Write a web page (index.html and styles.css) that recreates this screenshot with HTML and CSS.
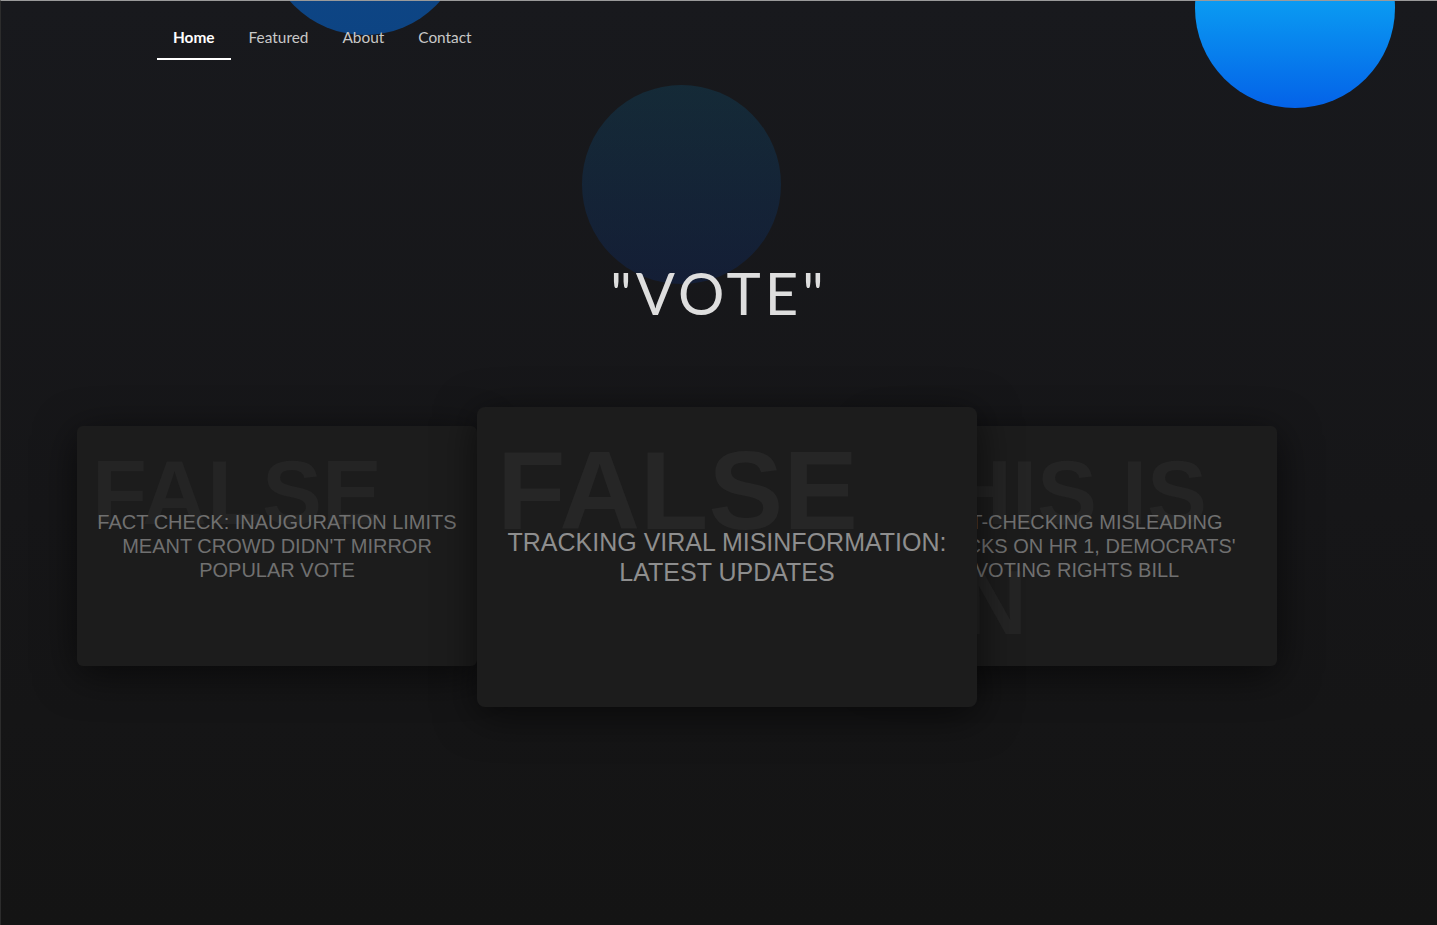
FILE: index.html
```html
<!DOCTYPE html>
<html lang="en">
<head>
<meta charset="utf-8">
<title>"VOTE"</title>
<link rel="stylesheet" href="styles.css">
</head>
<body>
  <div class="blob blob-nav"></div>
  <div class="blob blob-corner"></div>
  <div class="blob blob-hero"></div>

  <nav class="nav">
    <a class="nav-link active" href="#">Home</a>
    <a class="nav-link" href="#">Featured</a>
    <a class="nav-link" href="#">About</a>
    <a class="nav-link" href="#">Contact</a>
  </nav>

  <header class="hero">
    <h1 class="title">"VOTE"</h1>
  </header>

  <section class="carousel">
    <article class="card card-side">
      <p class="card-label">FALSE</p>
      <h2 class="card-title">Fact Check: Inauguration limits meant crowd didn't mirror popular vote</h2>
    </article>
    <article class="card card-main">
      <p class="card-label">FALSE</p>
      <h2 class="card-title">Tracking viral misinformation: Latest updates</h2>
    </article>
    <article class="card card-side card-right">
      <p class="card-label">THIS IS ON</p>
      <h2 class="card-title">Fact-checking misleading attacks on HR 1, Democrats' voting rights bill</h2>
    </article>
  </section>
</body>
</html>
```

FILE: styles.css
```css
html {
  border-top: 1px solid #9a9a9a;
  border-left: 1px solid #2c2c2c;
  background: #141414;
}

body {
  margin: 0;
  height: 924px;
  position: relative;
  overflow: hidden;
  background: linear-gradient(180deg, #18191d 0%, #161618 55%, #141414 100%);
  font-family: Lato, "Noto Sans", "Liberation Sans", sans-serif;
}

/* decorative blobs */
.blob {
  position: absolute;
  width: 200px;
  height: 200px;
  border-radius: 50%;
  z-index: 0;
}

.blob-nav {
  left: 264px;
  top: -166px;
  background: linear-gradient(180deg, #0f4a8c 0%, #0d4483 100%);
}

.blob-corner {
  left: 1194px;
  top: -93px;
  background: linear-gradient(180deg, #0bb2f6 0%, #0a9bf2 46%, #0462e8 100%);
}

.blob-hero {
  left: 581px;
  top: 84px;
  width: 199px;
  height: 199px;
  background: linear-gradient(180deg, rgba(0, 150, 220, 0.14) 0%, rgba(0, 70, 220, 0.14) 100%);
}

/* nav */
.nav {
  position: relative;
  z-index: 1;
  display: flex;
  gap: 2px;
  padding-left: 156px;
}

.nav-link {
  padding: 26px 16px 11px;
  line-height: 20px;
  font-size: 15.4px;
  color: #c8c8c8;
  text-decoration: none;
  border-bottom: 2px solid transparent;
}

.nav-link.active {
  color: #ffffff;
  font-weight: 700;
  border-bottom-color: #ffffff;
}

/* hero */
.hero {
  position: relative;
  z-index: 1;
}

.title {
  margin: 198px 0 0;
  text-align: center;
  font-size: 58px;
  line-height: 70px;
  font-weight: 400;
  letter-spacing: 4px;
  color: #dedede;
}

/* carousel */
.carousel {
  position: relative;
  z-index: 1;
  display: flex;
  align-items: flex-start;
  margin-top: 79px;
  padding-left: 76px;
}

.card {
  position: relative;
  flex: none;
  display: flex;
  align-items: center;
  justify-content: center;
  overflow: hidden;
  background: #1c1c1c;
  box-shadow: 0 8px 40px rgba(0, 0, 0, 0.6);
  font-family: "Liberation Sans", Arial, sans-serif;
  text-align: center;
}

.card-main {
  width: 500px;
  height: 300px;
  border-radius: 8px;
  z-index: 2;
}

.card-side {
  width: 400px;
  height: 240px;
  margin-top: 19px;
  border-radius: 6px;
  z-index: 1;
}

.card-right {
  margin-left: -100px;
}

.card-label {
  position: absolute;
  margin: 0;
  top: 16px;
  left: 20px;
  right: 16px;
  text-align: left;
  font-weight: 700;
  font-size: 112px;
  line-height: 1.22;
  color: #262626;
}

.card-side .card-label {
  top: 13px;
  left: 15px;
  right: 12px;
  font-size: 90px;
  color: #242424;
}

.card-title {
  position: relative;
  margin: 0;
  padding: 0 24px;
  font-weight: 400;
  font-size: 25px;
  line-height: 30px;
  text-transform: uppercase;
  color: #8e8e8e;
}

.card-side .card-title {
  padding: 0 19px;
  font-size: 20px;
  line-height: 24px;
  color: #707070;
}
```
